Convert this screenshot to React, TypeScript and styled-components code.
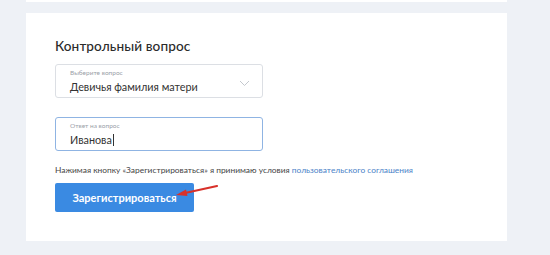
import React from 'react';
import styled, { createGlobalStyle } from 'styled-components';

const GlobalStyle = createGlobalStyle`
  html, body {
    margin: 0;
    padding: 0;
    background: #eef1f6;
  }
  body {
    font-family: 'Lato', 'Open Sans', sans-serif;
  }
`

const Page = styled.div`
  width: 550px;
  height: 255px;
  overflow: hidden;
  padding-left: 26px;
  box-sizing: border-box;
  display: flex;
  flex-direction: column;
`

const PrevCard = styled.div`
  width: 481px;
  height: 2px;
  background: #ffffff;
  margin-bottom: 11px;
`

const Card = styled.div`
  width: 481px;
  height: 228px;
  background: #ffffff;
  padding: 24px 0 0 29px;
  box-sizing: border-box;
  display: flex;
  flex-direction: column;
`

const Title = styled.h3`
  margin: 0 0 9px 0;
  font-size: 13.6px;
  font-weight: 500;
  line-height: 18px;
  color: #2b2b2b;
  letter-spacing: 0.1px;
`

const Field = styled.div<{ focused?: boolean }>`
  width: 208px;
  height: 34px;
  box-sizing: border-box;
  border: 1px solid ${p => (p.focused ? '#8fb4e3' : '#dcdfe4')};
  border-radius: 3px;
  padding: 4px 0 0 14px;
  display: flex;
  align-items: center;
  justify-content: space-between;
  margin-bottom: ${p => (p.focused ? '14px' : '19px')};
`

const FieldBody = styled.div`
  display: flex;
  flex-direction: column;
  align-self: flex-start;
`

const FieldLabel = styled.span`
  font-size: 6.5px;
  line-height: 8px;
  color: #9aa0a8;
`

const FieldValue = styled.span`
  font-size: 10.8px;
  line-height: 16px;
  color: #333333;
  margin-top: 2px;
  display: flex;
  align-items: center;
`

const Caret = styled.span`
  display: inline-block;
  width: 1px;
  height: 12px;
  background: #333;
  margin-left: 1px;
`

const Chevron = styled.svg`
  width: 11px;
  height: 7px;
  margin-right: 12px;
`

const Agreement = styled.p`
  margin: 0 0 8px 0;
  font-size: 8.4px;
  line-height: 10px;
  color: #444;
  white-space: nowrap;
`

const AgreementLink = styled.a`
  color: #4a82c8;
  text-decoration: none;
`

const ButtonRow = styled.div`
  position: relative;
  display: flex;
`

const Button = styled.button`
  width: 139px;
  height: 29px;
  border: none;
  border-radius: 2px;
  background: #3a8ae2;
  color: #ffffff;
  font-family: 'Lato', 'Open Sans', sans-serif;
  font-size: 11px;
  font-weight: 700;
  padding: 0;
  cursor: pointer;
`

const Arrow = styled.svg`
  position: absolute;
  left: 116px;
  top: 0px;
  width: 50px;
  height: 16px;
`

export default function App() {
  return (
    <>
      <GlobalStyle />
      <Page>
        <PrevCard />
        <Card>
          <Title>Контрольный вопрос</Title>
          <Field>
            <FieldBody>
              <FieldLabel>Выберите вопрос</FieldLabel>
              <FieldValue>Девичья фамилия матери</FieldValue>
            </FieldBody>
            <Chevron viewBox="0 0 11 7">
              <path d="M1 1 L5.5 5.5 L10 1" fill="none" stroke="#c4c8ce" strokeWidth="1" />
            </Chevron>
          </Field>
          <Field focused>
            <FieldBody>
              <FieldLabel>Ответ на вопрос</FieldLabel>
              <FieldValue>Иванова<Caret /></FieldValue>
            </FieldBody>
          </Field>
          <Agreement>
            Нажимая кнопку «Зарегистрироваться» я принимаю условия{' '}
            <AgreementLink href="#">пользовательского соглашения</AgreementLink>
          </Agreement>
          <ButtonRow>
            <Button>Зарегистрироваться</Button>
            <Arrow viewBox="0 0 50 16">
              <path d="M46 3 L14 10" stroke="#d8312a" strokeWidth="2.2" strokeLinecap="round" />
              <path d="M5 12 L15 6.5 L16.5 13 Z" fill="#d8312a" />
            </Arrow>
          </ButtonRow>
        </Card>
      </Page>
    </>
  );
}
